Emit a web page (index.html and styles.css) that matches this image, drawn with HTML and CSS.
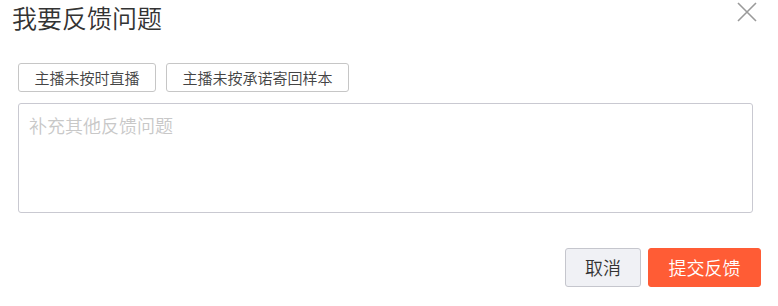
FILE: index.html
```html
<!DOCTYPE html>
<html lang="zh-CN">
<head>
<meta charset="utf-8">
<title>我要反馈问题</title>
<link rel="stylesheet" href="styles.css">
</head>
<body>
<div class="dialog">
  <div class="header">
    <h1 class="title">我要反馈问题</h1>
    <button class="close" aria-label="关闭">
      <svg width="20" height="20" viewBox="0 0 20 20"><path d="M1 1 L19 19 M19 1 L1 19" stroke="#9a9a9a" stroke-width="1.6" fill="none"/></svg>
    </button>
  </div>
  <div class="tags">
    <button class="tag">主播未按时直播</button>
    <button class="tag">主播未按承诺寄回样本</button>
  </div>
  <textarea class="input" placeholder="补充其他反馈问题"></textarea>
  <div class="footer">
    <button class="btn btn-cancel">取消</button>
    <button class="btn btn-submit">提交反馈</button>
  </div>
</div>
</body>
</html>
```
FILE: styles.css
```css
* { box-sizing: border-box; }
html, body { margin: 0; padding: 0; background: #fff; }
body {
  font-family: "Noto Sans CJK SC", "Liberation Sans", sans-serif;
  font-weight: 350;
  color: #333;
}
.dialog {
  width: 778px;
  height: 306px;
  padding: 0 17px 0 18px;
  display: flex;
  flex-direction: column;
}
.header {
  display: flex;
  justify-content: space-between;
  align-items: flex-start;
  height: 63px;
  margin-left: -6px;
}
.title {
  margin: 0;
  font-size: 25px;
  font-weight: 350;
  line-height: 34px;
  color: #333;
}
.close {
  margin: 2px 4px 0 0;
  padding: 0;
  border: 0;
  background: none;
  width: 20px;
  height: 20px;
  display: flex;
}
.tags {
  display: flex;
  gap: 10px;
}
.tag {
  height: 29px;
  padding: 0 15.5px;
  border: 1px solid #c6c6c6;
  border-radius: 3px;
  background: #fff;
  color: #444;
  font-family: inherit;
  font-weight: 350;
  font-size: 15px;
  line-height: 27px;
}
.input {
  margin-top: 11px;
  width: 735px;
  height: 110px;
  padding: 9px 10px;
  border: 1px solid #c9c9d1;
  border-radius: 3px;
  font-family: inherit;
  font-weight: 350;
  font-size: 18px;
  line-height: 24px;
  color: #333;
  resize: none;
  outline: none;
}
.input::placeholder { color: #c8c8c8; }
.footer {
  margin-top: 35px;
  display: flex;
  justify-content: flex-end;
  gap: 7px;
}
.btn {
  height: 39px;
  padding: 0 19px;
  border-radius: 3px;
  font-family: inherit;
  font-weight: 350;
  font-size: 18px;
  line-height: 37px;
}
.btn-cancel {
  border: 1px solid #c5c6cd;
  background: #f0f1f5;
  color: #333;
}
.btn-submit {
  border: 1px solid #ff5c35;
  background: #ff5c35;
  color: #fff;
  padding: 0 19.5px;
}
```
